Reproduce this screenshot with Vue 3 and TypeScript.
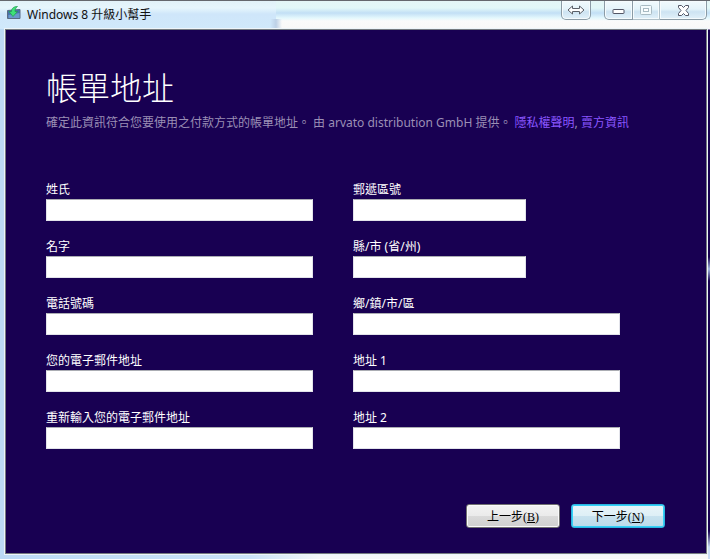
<script setup lang="ts">
import { reactive } from 'vue'

interface Field {
  id: string
  label: string
  type: string
  short?: boolean
}

const fields: Field[] = [
  { id: 'lastName', label: '姓氏', type: 'text' },
  { id: 'postalCode', label: '郵遞區號', type: 'text', short: true },
  { id: 'firstName', label: '名字', type: 'text' },
  { id: 'county', label: '縣/市 (省/州)', type: 'text', short: true },
  { id: 'phone', label: '電話號碼', type: 'tel' },
  { id: 'district', label: '鄉/鎮/市/區', type: 'text' },
  { id: 'email', label: '您的電子郵件地址', type: 'email' },
  { id: 'address1', label: '地址 1', type: 'text' },
  { id: 'emailConfirm', label: '重新輸入您的電子郵件地址', type: 'email' },
  { id: 'address2', label: '地址 2', type: 'text' },
]

const values = reactive<Record<string, string>>(
  Object.fromEntries(fields.map((f) => [f.id, ''])),
)
</script>

<template>
  <div class="window">
    <header class="titlebar">
      <svg class="app-icon" width="14" height="14" viewBox="0 0 14 14" aria-hidden="true">
        <path d="M.5 4.500 13 3.500v9H.5z" fill="#4672ae" stroke="#5a6b84" />
        <path d="M1.500 9 12.500 7v5h-11z" fill="#6b98cc" />
        <path d="M10.500 .5C7 .5 4.500 2 4.500 5.500H2L6 10.500 10.500 5.500H8C8 3.500 8.500 2 10.500 .5z" fill="#3fe078" stroke="#1c9c4c" stroke-width=".7" />
      </svg>
      <span class="title">Windows 8 升級小幫手</span>
      <button type="button" class="caption swap">
        <svg width="18" height="10" viewBox="0 0 18 10" aria-hidden="true">
          <path d="M1 5 5.500 1v2.500h7V1L17 5l-4.500 4V6.500h-7V9z" fill="#fff" stroke="#5b6068" />
        </svg>
      </button>
      <div class="caption-group">
        <button type="button" class="caption min">
          <svg width="13" height="6" viewBox="0 0 13 6" aria-hidden="true">
            <rect x="1" y=".5" width="11" height="4" rx=".5" fill="#fff" stroke="#535666" />
          </svg>
        </button>
        <button type="button" class="caption max" disabled>
          <svg width="12" height="10" viewBox="0 0 12 10" aria-hidden="true">
            <rect x=".5" y=".5" width="11" height="9" rx="1" fill="#f4fbfd" stroke="#a9bbc3" />
            <rect x="3.500" y="3.500" width="5" height="3" fill="#fff" stroke="#a9bbc3" />
          </svg>
        </button>
        <button type="button" class="caption close">
          <svg width="13" height="11" viewBox="0 0 13 11" aria-hidden="true">
            <path d="M1.500 .5h3l2 2 2-2h3v2l-2.500 3 2.500 3v2h-3l-2-2-2 2h-3v-2l2.500-3-2.500-3z" fill="#fff" stroke="#535666" />
          </svg>
        </button>
      </div>
    </header>

    <main class="client">
      <h1>帳單地址</h1>
      <p class="intro">
        確定此資訊符合您要使用之付款方式的帳單地址。 由 arvato distribution GmbH 提供。
        <a href="#privacy">隱私權聲明</a>, <a href="#seller">賣方資訊</a>
      </p>

      <form id="billing" class="fields" @submit.prevent>
        <div v-for="f in fields" :key="f.id" class="field">
          <label :for="f.id">{{ f.label }}</label>
          <input :id="f.id" v-model="values[f.id]" :type="f.type" :class="{ short: f.short }" />
        </div>
      </form>

      <footer class="actions">
        <button type="button" class="push">上一步(<u>B</u>)</button>
        <button type="submit" form="billing" class="push primary">下一步(<u>N</u>)</button>
      </footer>
    </main>
  </div>
</template>

<style>
body {
  margin: 0;
}
</style>

<style scoped>
.window {
  box-sizing: border-box;
  display: flex;
  flex-direction: column;
  min-height: 100vh;
  padding: 0 3px 5px 5px;
  border-top: 1px solid #65686d;
  background:
    linear-gradient(180deg, transparent 28px, #180052 29px, #180052 240px, #180052 256px, #a3b8e2 268px, #180052 280px, #180052 530px, #c9dcf5 546px) right / 2px 100% no-repeat,
    linear-gradient(90deg, #d0e8fb 0, #bdd0e6 6px, transparent 12px) 270px 18px / 12px 10px no-repeat,
    linear-gradient(180deg, #e4f6f6 0, #e2f8f8 7px, #c2dff5 12px, #e4f8fd 17px, #fafafa 20px, #f8f8f8 28px, transparent 28px) right top / calc(100% - 276px) 28px no-repeat,
    linear-gradient(180deg, #e2f2f8 0, #e6f6fc 7px, #cfe6fa 13px, #d0e9fb 28px, transparent 28px) left top / 100% 28px no-repeat,
    linear-gradient(90deg, #bcdaf5 0, #c9e1f7 35%, #f4f6f8 45%, #f8f8f8 100%);
  font-family: "Noto Sans", "Noto Sans CJK TC", sans-serif;
  font-size: 12px;
}

.titlebar {
  display: flex;
  align-items: flex-start;
  height: 28px;
  flex: none;
}

.app-icon {
  margin: 5px 6px 0 2px;
}

.title {
  margin-right: auto;
  line-height: 28px;
  color: #111;
  white-space: nowrap;
}

.caption {
  display: flex;
  align-items: center;
  justify-content: center;
  box-sizing: border-box;
  height: 19px;
  padding: 0;
  border: 1px solid #8b9ba5;
  border-top: 0;
  background: linear-gradient(180deg, #f1fafd 0, #e5f4fa 45%, #cde3f2 60%, #e2f1f9 100%);
  box-shadow: inset 0 0 0 1px #f5fbfd;
}

.swap {
  width: 30px;
  margin-right: 13px;
  border-radius: 0 0 5px 5px;
}

.caption-group {
  display: flex;
}

.min {
  width: 29px;
  padding-top: 4px;
  border-radius: 0 0 0 5px;
}

.max {
  width: 27px;
  border-left: 0;
  border-color: #b0c0c8;
}

.close {
  width: 47px;
  border-left: 0;
  border-radius: 0 0 5px 0;
}

.client {
  box-sizing: border-box;
  display: flex;
  flex: 1;
  flex-direction: column;
  padding: 38px 41px 25px 40px;
  border: 1px solid #757b80;
  outline: 1px solid #eef5fa;
  background: #180052;
  color: #fff;
}

h1 {
  margin: 0;
  font-size: 32px;
  font-weight: 300;
  line-height: 40px;
}

.intro {
  margin: 5px 0 48px;
  line-height: 20px;
  color: #9b8fb5;
}

.intro a {
  color: #8a56ff;
  text-decoration: none;
}

.fields {
  display: grid;
  grid-template-columns: repeat(2, minmax(0, 267px));
  gap: 17px 40px;
}

.field {
  display: flex;
  flex-direction: column;
}

.field label {
  line-height: 18px;
}

.field input {
  box-sizing: border-box;
  width: 100%;
  height: 22px;
  padding: 0 4px;
  border: 1px solid #e2e3ea;
  border-top-color: #abadb3;
  border-radius: 0;
  background: #fff;
  font: inherit;
}

.field input.short {
  max-width: 173px;
}

.actions {
  display: flex;
  justify-content: flex-end;
  gap: 11px;
  margin-top: auto;
}

.push {
  width: 94px;
  height: 24px;
  padding: 2px 0 0;
  border: 1px solid #707070;
  border-radius: 3px;
  background: linear-gradient(180deg, #f2f2f2 0, #ebebeb 48%, #dadada 50%, #cfcfcf 100%);
  box-shadow: inset 0 0 0 1px #fafafa;
  color: #000;
  font-family: "Liberation Serif", "Noto Sans CJK TC", serif;
  font-size: 12px;
  line-height: 20px;
}

.primary {
  border-color: #2ab4e0;
  background: linear-gradient(180deg, #e9f4f9 0, #deeff6 48%, #c8e2ef 50%, #bbdaea 100%);
  box-shadow: inset 0 0 0 1px #35d0f8;
}
</style>
